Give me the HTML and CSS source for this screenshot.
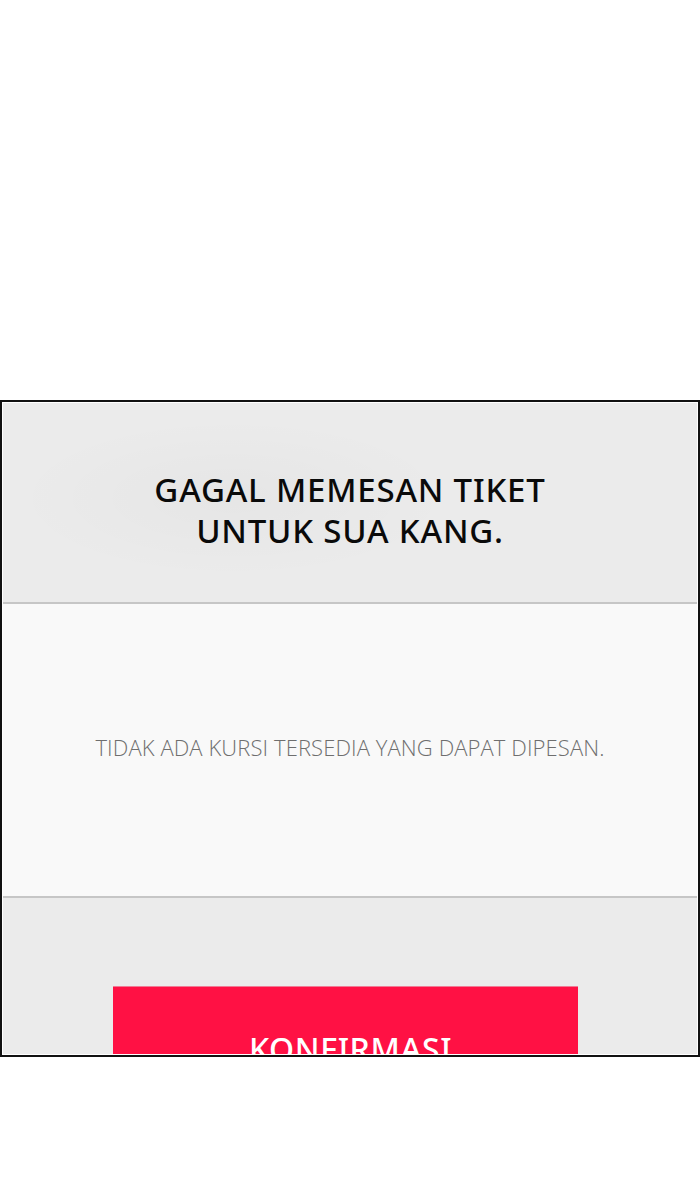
FILE: index.html
```html
<!DOCTYPE html>
<html lang="id">
<head>
<meta charset="utf-8">
<link rel="stylesheet" href="styles.css">
</head>
<body>
<div class="spacer"></div>
<div class="panel">
  <div class="inner">
    <div class="head">
      <h1 class="title">GAGAL MEMESAN TIKET<br>UNTUK SUA KANG.</h1>
    </div>
    <div class="body">
      <p class="msg">TIDAK ADA KURSI TERSEDIA YANG DAPAT DIPESAN.</p>
    </div>
    <div class="foot">
      <div class="btn">KONFIRMASI</div>
    </div>
  </div>
</div>
</body>
</html>
```
FILE: styles.css
```css
html, body {
  margin: 0;
  padding: 0;
  background: #ffffff;
}
.spacer {
  height: 400px;
}
.panel {
  width: 700px;
  height: 657px;
  box-sizing: border-box;
  border: 2px solid #111111;
  padding: 1px;
  background: #ffffff;
  overflow: hidden;
}
.inner {
  height: 100%;
  display: flex;
  flex-direction: column;
  overflow: hidden;
}
.head {
  height: 199px;
  flex: none;
  display: flex;
  align-items: center;
  justify-content: center;
  background:
    radial-gradient(ellipse 220px 80px at 230px 95px, rgba(0,0,0,0.025), rgba(0,0,0,0) 100%),
    #ebebeb;
  border-bottom: 2px solid #c6c6c6;
}
.title {
  margin: 0;
  padding-top: 14px;
  font-family: "Noto Sans", "Open Sans", sans-serif;
  font-weight: 500;
  font-size: 33px;
  line-height: 41px;
  letter-spacing: 0.8px;
  color: #0a0a0a;
  text-align: center;
}
.body {
  height: 292px;
  flex: none;
  display: flex;
  align-items: center;
  justify-content: center;
  background: #f9f9f9;
  border-bottom: 2px solid #c6c6c6;
}
.msg {
  margin: 0;
  padding-bottom: 6px;
  font-family: "Open Sans", "Noto Sans", sans-serif;
  font-weight: 300;
  font-size: 22px;
  letter-spacing: 0.1px;
  color: #6e6e6e;
}
.foot {
  flex: 1;
  background: #ebebeb;
  padding-top: 88px;
  padding-left: 110px;
}
.btn {
  width: 465px;
  height: 140px;
  box-sizing: border-box;
  background: #ff1144;
  border-top: 1px solid #f07a94;
  color: #ffffff;
  font-family: "Noto Sans", "Open Sans", sans-serif;
  font-weight: 500;
  font-size: 32px;
  text-align: center;
  padding-top: 40px;
  padding-left: 10px;
  letter-spacing: 0.6px;
}
```
